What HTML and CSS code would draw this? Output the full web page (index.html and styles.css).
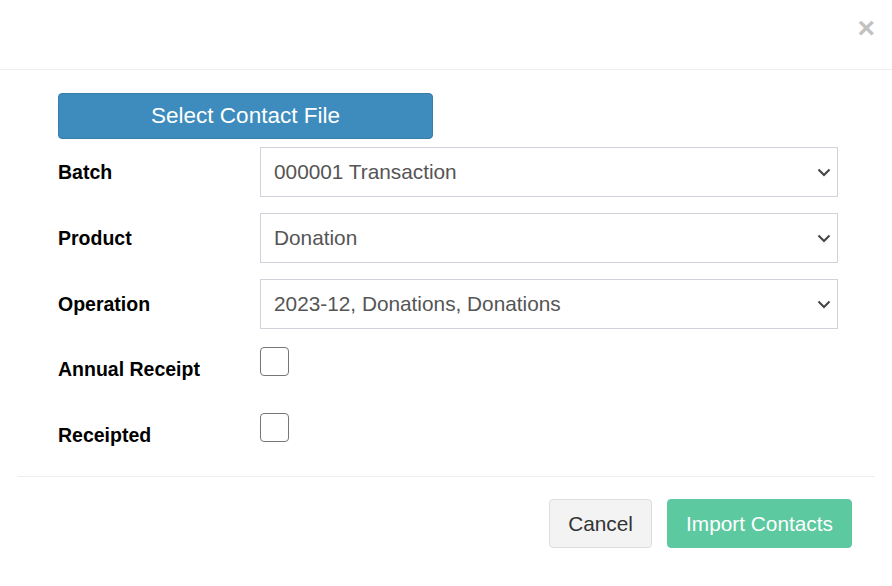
FILE: index.html
```html
<!DOCTYPE html>
<html lang="en">
<head>
    <meta charset="UTF-8">
    <meta name="viewport" content="width=device-width, initial-scale=1.0">
    <title>Import Contacts</title>
    <link rel="stylesheet" href="styles.css">
</head>
<body>
    <div class="modal">
        <!-- header -->
        <div class="modal-header">
            <span class="close">&times;</span>
        </div>

        <!-- form -->
        <div class="modal-body">
            <button class="btn-file">Select Contact File</button>

            <div class="form-row">
                <label>Batch</label>
                <div class="select">
                    <span>000001 Transaction</span>
                    <svg class="chev" width="14" height="9" viewBox="0 0 14 9"><path d="M1.5 1.5 L7 7 L12.5 1.5" fill="none" stroke="#444" stroke-width="2"/></svg>
                </div>
            </div>

            <div class="form-row">
                <label>Product</label>
                <div class="select">
                    <span>Donation</span>
                    <svg class="chev" width="14" height="9" viewBox="0 0 14 9"><path d="M1.5 1.5 L7 7 L12.5 1.5" fill="none" stroke="#444" stroke-width="2"/></svg>
                </div>
            </div>

            <div class="form-row">
                <label>Operation</label>
                <div class="select">
                    <span>2023-12, Donations, Donations</span>
                    <svg class="chev" width="14" height="9" viewBox="0 0 14 9"><path d="M1.5 1.5 L7 7 L12.5 1.5" fill="none" stroke="#444" stroke-width="2"/></svg>
                </div>
            </div>

            <div class="form-row check-row">
                <label>Annual Receipt</label>
                <span class="checkbox"></span>
            </div>

            <div class="form-row check-row">
                <label>Receipted</label>
                <span class="checkbox"></span>
            </div>
        </div>

        <!-- footer -->
        <div class="modal-footer">
            <button class="btn btn-cancel">Cancel</button>
            <button class="btn btn-import">Import Contacts</button>
        </div>
    </div>
</body>
</html>
```

FILE: styles.css
```css
body {
    margin: 0;
    font-family: "Liberation Sans", Arial, sans-serif;
    background-color: #fff;
    color: #000;
}
.modal {
    width: 892px;
}
.modal-header {
    height: 69px;
    border-bottom: 1px solid #eeeeee;
    position: relative;
}
.close {
    position: absolute;
    right: 17px;
    top: 13px;
    font-size: 30px;
    font-weight: bold;
    color: #c2c2c2;
    line-height: 1;
}
.modal-body {
    padding: 23px 54px 0 58px;
}
.btn-file {
    display: block;
    width: 375px;
    height: 46px;
    background-color: #3d8cbd;
    border: 1px solid #367fa9;
    border-radius: 4px;
    color: #fff;
    font-family: inherit;
    font-size: 22.5px;
    padding: 0;
    margin-bottom: 8px;
}
.form-row {
    display: flex;
    align-items: center;
    height: 50px;
    margin-bottom: 16px;
}
.form-row:last-child {
    margin-bottom: 15px;
}
.form-row label {
    width: 202px;
    font-weight: bold;
    font-size: 19.5px;
}
.select {
    flex: 1;
    height: 50px;
    box-sizing: border-box;
    border: 1px solid #d2d1da;
    display: flex;
    align-items: center;
    justify-content: space-between;
    padding: 0 6px 0 13px;
    font-size: 20.8px;
    color: #555;
}
.chev {
    margin-top: 1px;
}
.check-row {
    align-items: flex-start;
}
.check-row label {
    margin-top: 13px;
}
.checkbox {
    width: 27px;
    height: 27px;
    margin-top: 2px;
    border: 1.5px solid #767676;
    border-radius: 4px;
}
.modal-footer {
    margin: 0 17px 0 18px;
    border-top: 1px solid #eeeeee;
    padding: 22px 23px 0 0;
    display: flex;
    justify-content: flex-end;
    gap: 15px;
}
.btn {
    height: 49px;
    font-family: inherit;
    font-size: 20.8px;
    border-radius: 4px;
    padding: 0 18px;
}
.btn-cancel {
    width: 103px;
    background-color: #f3f3f3;
    border: 1px solid #dddddd;
    color: #333;
}
.btn-import {
    width: 185px;
    background-color: #5cc9a0;
    border: 1px solid #5cc9a0;
    color: #fff;
}
```
